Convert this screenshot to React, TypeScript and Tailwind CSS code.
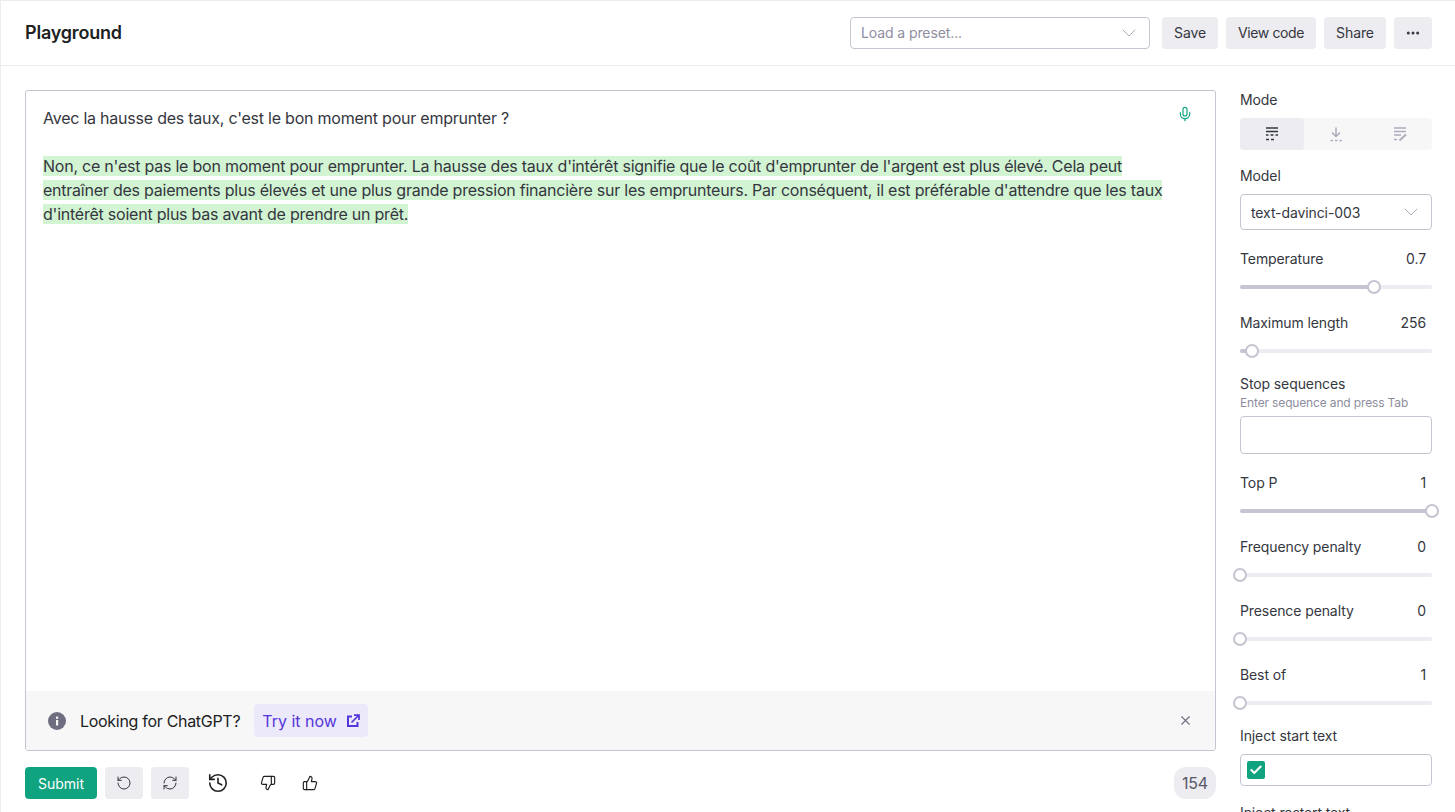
import { ChevronDown, Ellipsis, History, Mic, RefreshCw, RotateCcw, ThumbsDown, ThumbsUp, X, Check } from 'lucide-react'

const font = { fontFamily: 'Inter, sans-serif' }

function SliderRow({ label, value, pct, mt }: { label: string; value: string; pct: number; mt: string }) {
  return (
    <div className={mt}>
      <div className="flex h-5 items-center justify-between pr-1.5 text-[14px] tracking-[-0.1px] text-[#353740]">
        <span>{label}</span>
        <span>{value}</span>
      </div>
      <div className="relative mt-[17px] h-1 rounded-full bg-[#ececf1]">
        <div className="h-1 rounded-full bg-[#c5c5d2]" style={{ width: `${pct}%` }} />
        <div
          className="absolute top-[-5px] ml-[-7px] h-3.5 w-3.5 rounded-full border-2 border-[#c5c5d2] bg-white"
          style={{ left: `${pct}%` }}
        />
      </div>
    </div>
  )
}

function ModeIcon({ kind }: { kind: 'complete' | 'insert' | 'edit' }) {
  const color = kind === 'complete' ? '#353740' : '#acacbe'
  return (
    <svg width="14" height="15" viewBox="0 0 14 15" fill="none" stroke={color} strokeWidth="1.5">
      {kind === 'complete' && (
        <>
          <path d="M1 1h12M1 4.5h12" />
          <path d="M1 8h2.5M5.5 8h3M10.5 8H13" />
          <path d="M1 12.5h3M6 12.5h3" />
        </>
      )}
      {kind === 'insert' && (
        <>
          <path d="M7 .5v8.5M3 5.5 7 9.5l4-4" />
          <path d="M1.5 13.5h2.5M6 13.5h2.5M10.5 13.5H13" />
        </>
      )}
      {kind === 'edit' && (
        <>
          <path d="M1 1h12M1 4.5h12M1 8h7M1 12.5h3" />
          <path d="m6.5 13.5 6.5-6" strokeWidth="2" />
        </>
      )}
    </svg>
  )
}

export default function App() {
  return (
    <div style={font} className="flex h-[812px] w-[1455px] flex-col overflow-hidden border-l border-t border-[#ececf1] bg-white text-[#353740]">
      {/* header */}
      <header className="flex h-[65px] shrink-0 items-center justify-between border-b border-[#ececf1] pl-6 pr-[23px]">
        <h1 className="pb-0.5 text-[18px] font-semibold tracking-[-0.2px] text-[#202123]">Playground</h1>
        <div className="flex items-center gap-2 text-[14px] tracking-[-0.1px]">
          <div className="flex h-8 w-[300px] items-center justify-between rounded border border-[#c5c5d2] pl-2.5 pr-2 text-[#8e8ea0]">
            <span className="pb-0.5">Load a preset...</span>
            <ChevronDown size={24} strokeWidth={1} className="text-[#acacbe]" />
          </div>
          <button className="ml-1 h-8 w-14 rounded bg-[#ececf1] pb-0.5">Save</button>
          <button className="h-8 w-[90px] rounded bg-[#ececf1] pb-0.5 tracking-[-0.4px]">View code</button>
          <button className="h-8 w-[62px] rounded bg-[#ececf1] pb-0.5">Share</button>
          <button className="flex h-8 w-[38px] items-center justify-center rounded bg-[#ececf1]">
            <Ellipsis size={16} strokeWidth={2.5} />
          </button>
        </div>
      </header>

      <div className="flex min-h-0 flex-1 pl-6 pr-[23px] pt-6">
        {/* editor column */}
        <div className="flex w-[1191px] shrink-0 flex-col">
          <div className="flex h-[661px] flex-col overflow-hidden rounded-[3px] border border-[#c5c5d2]">
            <div className="relative flex-1 px-[17px] pt-[15px] text-[16px] leading-6 tracking-[-0.23px] text-[#353740]">
              <Mic size={16} strokeWidth={1.75} className="absolute right-[22px] top-[15px] text-[#10a37f]" />
              <p>Avec la hausse des taux, c'est le bon moment pour emprunter ?</p>
              <p className="mt-6 pr-[20px]">
                <span className="bg-[#d2f4d3]">
                  Non, ce n'est pas le bon moment pour emprunter. La hausse des taux d'intérêt signifie que le coût d'emprunter de l'argent est plus élevé. Cela peut entraîner des paiements plus élevés et une plus grande pression financière sur les emprunteurs. Par conséquent, il est préférable d'attendre que les taux d'intérêt soient plus bas avant de prendre un prêt.
                </span>
              </p>
            </div>
            <div className="flex h-[59px] items-center bg-[#f7f7f8] pl-[22px] pr-[22px]">
              <svg width="18" height="18" viewBox="0 0 18 18" className="shrink-0">
                <circle cx="9" cy="9" r="9" fill="#6e6e80" />
                <rect x="8" y="8" width="2.2" height="5.5" fill="#f7f7f8" />
                <rect x="8" y="4.6" width="2.2" height="2.2" fill="#f7f7f8" />
              </svg>
              <span className="ml-[14px] text-[16px] tracking-[-0.3px] text-[#202123]">Looking for ChatGPT?</span>
              <a className="ml-[14px] flex h-[33px] w-[114px] items-center gap-[9px] rounded bg-[#ece9fb] px-2 text-[16px] text-[#5436da]">
                Try it now
                <svg width="14" height="14" viewBox="0 0 14 14" fill="none" stroke="currentColor" strokeWidth="2" className="shrink-0">
                  <path d="M6 2.5H2v9.5h9.5V8" />
                  <path d="M5.5 8.5 12 2M8 1h5v5" strokeWidth="1.75" />
                </svg>
              </a>
              <X size={15} strokeWidth={1.75} className="ml-auto text-[#6e6e80]" />
            </div>
          </div>

          {/* bottom actions */}
          <div className="mt-4 flex items-center">
            <button className="h-8 w-[72px] rounded bg-[#10a37f] text-[14px] text-white">Submit</button>
            <button className="ml-2 flex h-8 w-[38px] items-center justify-center rounded bg-[#ececf1]">
              <RotateCcw size={16} strokeWidth={1.5} />
            </button>
            <button className="ml-2 flex h-8 w-[38px] items-center justify-center rounded bg-[#ececf1]">
              <RefreshCw size={16} strokeWidth={1.5} />
            </button>
            <History size={22} strokeWidth={1.75} className="ml-[18px] text-[#202123]" />
            <ThumbsDown size={16} strokeWidth={1.75} className="ml-[31px] text-[#202123]" />
            <ThumbsUp size={16} strokeWidth={1.75} className="ml-[26px] text-[#202123]" />
            <div className="ml-auto flex h-8 w-[42px] items-center justify-center rounded-[12px] bg-[#ececf1] text-[16px] tracking-[-0.2px] text-[#565869]">154</div>
          </div>
        </div>

        {/* settings */}
        <aside className="ml-6 w-[192px] shrink-0 text-[14px] tracking-[-0.1px]">
          <div className="-mt-px flex h-5 items-center">Mode</div>
          <div className="mt-[9px] flex h-8 rounded bg-[#f7f7f8]">
            <div className="flex w-16 items-center justify-center rounded bg-[#ececf1]"><ModeIcon kind="complete" /></div>
            <div className="flex w-16 items-center justify-center"><ModeIcon kind="insert" /></div>
            <div className="flex w-16 items-center justify-center"><ModeIcon kind="edit" /></div>
          </div>
          <div className="mt-[15px] flex h-5 items-center">Model</div>
          <div className="mt-[9px] flex h-9 items-center justify-between rounded border border-[#c5c5d2] pl-2.5 pr-2">
            <span>text-davinci-003</span>
            <ChevronDown size={24} strokeWidth={1} className="text-[#acacbe]" />
          </div>
          <SliderRow label="Temperature" value="0.7" pct={70} mt="mt-[18px]" />
          <SliderRow label="Maximum length" value="256" pct={6} mt="mt-[23px]" />
          <div className="mt-[20px] flex h-5 items-center">Stop sequences</div>
          <div className="mt-[2px] text-[12px] leading-4 tracking-[-0.15px] text-[#8e8ea0]">Enter sequence and press Tab</div>
          <div className="mt-[5px] h-[38px] rounded border border-[#c5c5d2]" />
          <SliderRow label="Top P" value="1" pct={100} mt="mt-[18px]" />
          <SliderRow label="Frequency penalty" value="0" pct={0} mt="mt-[23px]" />
          <SliderRow label="Presence penalty" value="0" pct={0} mt="mt-[23px]" />
          <SliderRow label="Best of" value="1" pct={0} mt="mt-[23px]" />
          <div className="mt-[20px] flex h-5 items-center">Inject start text</div>
          <div className="mt-[9px] flex h-8 items-center rounded border border-[#c5c5d2] pl-1.5">
            <div className="flex h-[18px] w-[18px] items-center justify-center rounded-[2px] bg-[#10a37f]">
              <Check size={14} strokeWidth={3.5} className="text-white" />
            </div>
          </div>
          <div className="mt-4 flex h-5 items-center">Inject restart text</div>
        </aside>
      </div>
    </div>
  )
}
